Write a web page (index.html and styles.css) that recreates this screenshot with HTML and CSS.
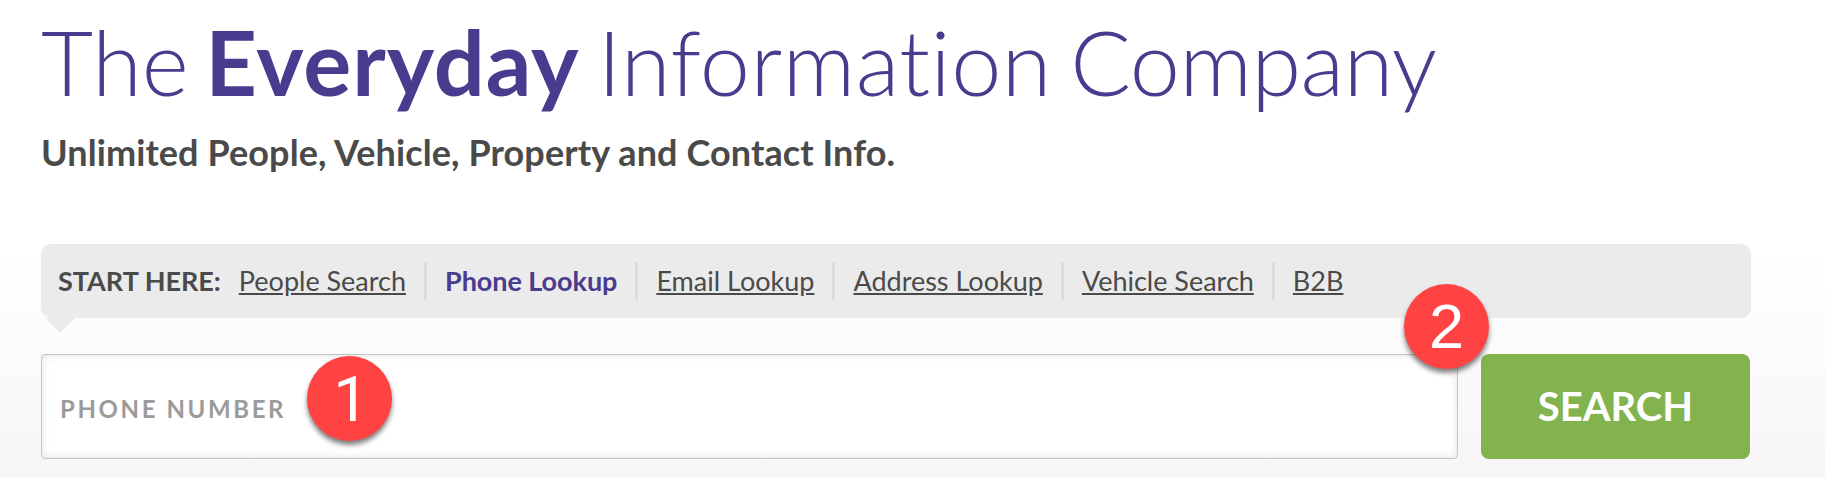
FILE: index.html
```
<!DOCTYPE html>
<html lang="en">
<head>
    <meta charset="UTF-8">
    <meta name="viewport" content="width=device-width, initial-scale=1.0">
    <title>The Everyday Information Company</title>
    <link rel="stylesheet" href="styles.css">
</head>
<body>
    <main class="hero">
        <h1>The <strong>Everyday</strong> <span class="wide">Information</span> <span class="tight">Company</span></h1>
        <h2>Unlimited People, Vehicle, Property and Contact Info.</h2>

        <nav class="search-nav">
            <span class="nav-label">START HERE:</span>
            <ul class="nav-list">
                <li><a href="#">People Search</a></li>
                <li><a href="#" class="active">Phone Lookup</a></li>
                <li><a href="#">Email Lookup</a></li>
                <li><a href="#">Address Lookup</a></li>
                <li><a href="#">Vehicle Search</a></li>
                <li><a href="#">B2B</a></li>
            </ul>
        </nav>

        <form class="search-form">
            <input type="text" class="search-input" placeholder="PHONE NUMBER">
            <button type="button" class="search-button">SEARCH</button>
            <span class="step step-one">1</span>
            <span class="step step-two">2</span>
        </form>
    </main>
</body>
</html>
```

FILE: styles.css
```
* {
    box-sizing: border-box;
}
body {
    margin: 0;
    height: 478px;
    overflow: hidden;
    font-family: Lato, sans-serif;
    color: #4a4a4a;
    background: linear-gradient(to bottom, #ffffff 0, #ffffff 250px, #f6f6f6 478px);
}
.hero {
    width: 1710px;
    margin-left: 41px;
    padding-top: 7px;
}
h1 {
    margin: 0;
    font-size: 90px;
    font-weight: 300;
    line-height: 108px;
    word-spacing: -8px;
    font-variant-ligatures: none;
    color: #4b3b8f;
    white-space: nowrap;
}
h1 strong {
    font-weight: 700;
    letter-spacing: 0.9px;
}
h1 .wide {
    margin-left: 2px;
    letter-spacing: 0.5px;
}
h1 .tight {
    margin-left: 2px;
    letter-spacing: -0.5px;
}
h2 {
    margin: 15px 0 0;
    font-size: 36px;
    font-weight: 700;
    line-height: 44px;
    letter-spacing: 0.1px;
}
.search-nav {
    position: relative;
    display: flex;
    align-items: center;
    height: 74px;
    margin-top: 70px;
    padding-left: 17px;
    font-size: 27px;
    background: #ebebeb;
    border-radius: 10px;
}
/* pointer under the bar */
.search-nav::after {
    content: "";
    position: absolute;
    top: 100%;
    left: 4px;
    border: 15px solid transparent;
    border-top-color: #ebebeb;
    border-bottom: 0;
}
.nav-label {
    font-weight: 700;
    line-height: 38px;
}
.nav-list {
    display: flex;
    margin: 0;
    padding: 0;
    list-style: none;
}
.nav-list li {
    padding: 0 18px;
    line-height: 38px;
    border-right: 3px solid #dcdcdc;
}
.nav-list li:last-child {
    border-right: 0;
}
.nav-list a {
    color: #4a4a4a;
}
.nav-list .active {
    font-weight: 700;
    letter-spacing: -0.05px;
    color: #4b3b8f;
    text-decoration: none;
}
.search-form {
    position: relative;
    display: flex;
    gap: 23px;
    height: 105px;
    margin-top: 36px;
}
.search-input {
    width: 1417px;
    padding: 4px 18px 0;
    font-family: inherit;
    font-size: 24px;
    font-weight: 700;
    letter-spacing: 2.6px;
    background: #fff;
    border: 1px solid #c4c4c4;
    border-radius: 4px;
    box-shadow: inset 0 0 8px rgba(0,0,0,0.12);
}
.search-input::placeholder {
    color: #9b9b9b;
}
.search-button {
    width: 269px;
    padding: 0 0 2px;
    font-family: inherit;
    font-size: 40px;
    font-weight: 700;
    color: #fff;
    background: #82b34e;
    border: 0;
    border-radius: 8px;
}
.step {
    position: absolute;
    width: 85px;
    height: 85px;
    font-family: "Liberation Sans", Arial, sans-serif;
    font-size: 63px;
    line-height: 85px;
    text-align: center;
    color: #fff;
    background: #ff4343;
    border-radius: 50%;
    box-shadow: 0 4px 5px rgba(0,0,0,0.5);
}
.step-one {
    top: 2px;
    left: 266px;
    padding-left: 3px;
    font-family: Roboto, sans-serif;
    line-height: 87px;
}
.step-two {
    top: -70px;
    left: 1363px;
}
```
